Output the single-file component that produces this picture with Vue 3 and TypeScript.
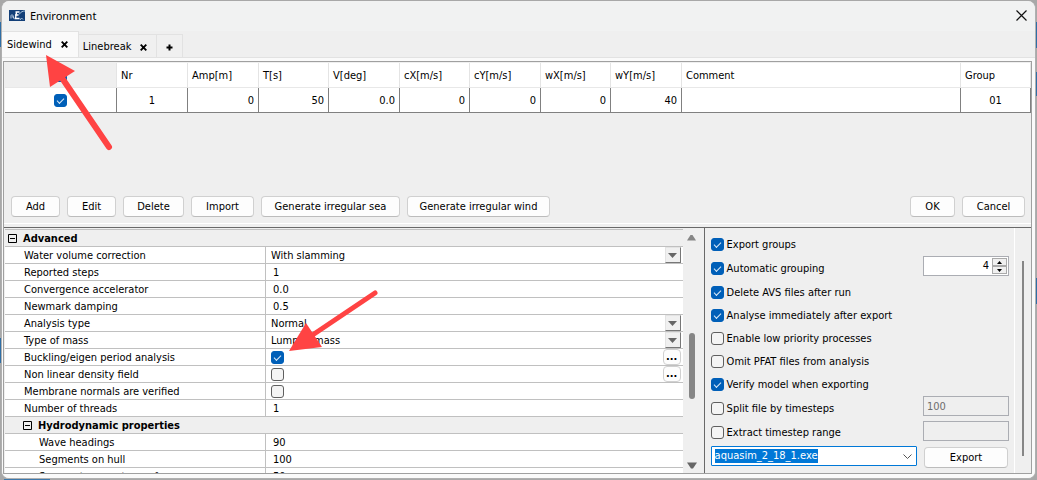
<script setup lang="ts">
import { onMounted, ref } from 'vue'

interface Column { key: string; label: string; width?: number; align: 'right' | 'center' | 'left' }
interface PropRow {
  label: string
  kind: 'group' | 'text' | 'select' | 'check'
  value?: string
  checked?: boolean
  more?: boolean
  level: number
}
interface Option { id: string; label: string; checked: boolean; size: 'mid' | 'low' | 'tall' }

const columns: Column[] = [
  { key: 'nr', label: 'Nr', width: 71, align: 'center' },
  { key: 'amp', label: 'Amp[m]', width: 71, align: 'right' },
  { key: 't', label: 'T[s]', width: 70, align: 'right' },
  { key: 'v', label: 'V[deg]', width: 71, align: 'right' },
  { key: 'cx', label: 'cX[m/s]', width: 70, align: 'right' },
  { key: 'cy', label: 'cY[m/s]', width: 71, align: 'right' },
  { key: 'wx', label: 'wX[m/s]', width: 70, align: 'right' },
  { key: 'wy', label: 'wY[m/s]', width: 71, align: 'right' },
  { key: 'comment', label: 'Comment', align: 'left' },
  { key: 'group', label: 'Group', width: 70, align: 'center' },
]

const loads = ref<Record<string, string>[]>([
  { nr: '1', amp: '0', t: '50', v: '0.0', cx: '0', cy: '0', wx: '0', wy: '40', comment: '', group: '01' },
])
const allEnabled = ref(true)
const enabled = ref([true])

const tabs = ['Sidewind', 'Linebreak']
const active = ref('Sidewind')
const actions = ['Add', 'Edit', 'Delete', 'Import', 'Generate irregular sea', 'Generate irregular wind']
const actionWidths = [49, 49, 61, 63, 139, 143]

const props = ref<PropRow[]>([
  { label: 'Advanced', kind: 'group', level: 0 },
  { label: 'Water volume correction', kind: 'select', value: 'With slamming', level: 1 },
  { label: 'Reported steps', kind: 'text', value: '1', level: 1 },
  { label: 'Convergence accelerator', kind: 'text', value: '0.0', level: 1 },
  { label: 'Newmark damping', kind: 'text', value: '0.5', level: 1 },
  { label: 'Analysis type', kind: 'select', value: 'Normal', level: 1 },
  { label: 'Type of mass', kind: 'select', value: 'Lumped mass', level: 1 },
  { label: 'Buckling/eigen period analysis', kind: 'check', checked: true, more: true, level: 1 },
  { label: 'Non linear density field', kind: 'check', checked: false, more: true, level: 1 },
  { label: 'Membrane normals are verified', kind: 'check', checked: false, level: 1 },
  { label: 'Number of threads', kind: 'text', value: '1', level: 1 },
  { label: 'Hydrodynamic properties', kind: 'group', level: 1 },
  { label: 'Wave headings', kind: 'text', value: '90', level: 2 },
  { label: 'Segments on hull', kind: 'text', value: '100', level: 2 },
  { label: 'Segments on water surface', kind: 'text', value: '50', level: 2 },
])

const options = ref<Option[]>([
  { id: 'groups', label: 'Export groups', checked: true, size: 'mid' },
  { id: 'auto', label: 'Automatic grouping', checked: true, size: 'mid' },
  { id: 'avs', label: 'Delete AVS files after run', checked: true, size: 'mid' },
  { id: 'analyse', label: 'Analyse immediately after export', checked: true, size: 'low' },
  { id: 'priority', label: 'Enable low priority processes', checked: false, size: 'low' },
  { id: 'pfat', label: 'Omit PFAT files from analysis', checked: false, size: 'low' },
  { id: 'verify', label: 'Verify model when exporting', checked: true, size: 'low' },
  { id: 'split', label: 'Split file by timesteps', checked: false, size: 'mid' },
  { id: 'range', label: 'Extract timestep range', checked: false, size: 'tall' },
])

const grouping = ref(4)
const splitSteps = ref('100')
const stepRange = ref('')
const program = ref('aquasim_2_18_1.exe')
const programBox = ref<HTMLInputElement | null>(null)

onMounted(() => {
  programBox.value?.focus()
  programBox.value?.select()
})
</script>

<template>
  <div class="desktop">
    <div class="window" role="dialog" aria-label="Environment">
      <header class="titlebar">
        <svg class="logo" width="16" height="11" viewBox="0 0 16 11" aria-hidden="true">
          <rect width="16" height="11" fill="#123f78" />
          <path d="M1.500 6.500c0-2 3-2 3 0v2M2 8.500c-1-1.500 1-2 2.500-1.500" stroke="#b9cce0" stroke-width="1" fill="none" />
          <path d="M6.500 2h4M6 5h3.500M5.500 8.500h5M7.500 2L6.500 8.500" stroke="#fff" stroke-width="1.400" fill="none" />
          <path d="M10 4.500c2-3 4-3.500 6-3.500M11 10l1.500-2 1.500 1.500" stroke="#a9c4de" stroke-width="1" fill="none" />
        </svg>
        <h1>Environment</h1>
        <button class="close" type="button" aria-label="Close">
          <svg width="11" height="11" viewBox="0 0 11 11"><path d="M.5.5l10 10M10.500.5l-10 10" stroke="#111" stroke-width="1.200" /></svg>
        </button>
      </header>

      <nav class="tabs">
        <div v-for="tab in tabs" :key="tab" class="tab" :class="{ active: tab === active }">
          <button type="button" @click="active = tab">{{ tab }}</button>
          <button type="button" class="tab-icon" :aria-label="'Close ' + tab">
            <svg width="7" height="7" viewBox="0 0 7 7"><path d="M.7.7l5.600 5.600M6.300.7L.7 6.300" stroke="#000" stroke-width="1.900" /></svg>
          </button>
        </div>
        <div class="tab add">
          <button type="button" class="tab-icon" aria-label="Add tab">
            <svg width="7" height="7" viewBox="0 0 7 7"><path d="M3.500.5v6M.5 3.500h6" stroke="#000" stroke-width="2" /></svg>
          </button>
        </div>
      </nav>

      <main class="page">
        <div class="frame">
          <section class="upper">
            <table class="loads">
              <colgroup>
                <col class="c-check" />
                <col v-for="c in columns" :key="c.key" :style="c.width ? { width: c.width + 'px' } : {}" />
              </colgroup>
              <thead>
                <tr>
                  <th class="center corner"><input v-model="allEnabled" type="checkbox" aria-label="Enable all" /></th>
                  <th v-for="c in columns" :key="c.key" scope="col">{{ c.label }}</th>
                </tr>
              </thead>
              <tbody>
                <tr v-for="(row, i) in loads" :key="i">
                  <td class="center"><input v-model="enabled[i]" type="checkbox" aria-label="Enable load" /></td>
                  <td v-for="c in columns" :key="c.key" :class="c.align">{{ row[c.key] }}</td>
                </tr>
              </tbody>
            </table>
            <div class="actions">
              <button v-for="(a, i) in actions" :key="a" type="button" class="btn" :style="{ width: actionWidths[i] + 'px' }">{{ a }}</button>
              <span class="spacer"></span>
              <button type="button" class="btn ok">OK</button>
              <button type="button" class="btn cancel">Cancel</button>
            </div>
          </section>

          <section class="lower">
            <div class="grid-pane">
              <table class="props">
                <colgroup><col class="c-name" /><col /></colgroup>
                <tbody>
                  <tr v-for="row in props" :key="row.label" :class="row.kind">
                    <th v-if="row.kind === 'group'" colspan="2" scope="colgroup" :class="'g' + row.level">
                      <button type="button" class="fold">
                        <svg width="9" height="9" viewBox="0 0 9 9" aria-hidden="true"><path d="M.5.5h8v8h-8zM2 4.500h5" fill="none" stroke="#000" /></svg>
                        {{ row.label }}
                      </button>
                    </th>
                    <template v-else>
                      <th scope="row" :class="'l' + row.level">{{ row.label }}</th>
                      <td>
                        <div class="cell">
                          <template v-if="row.kind === 'select'">
                            <select v-model="row.value" :aria-label="row.label"><option>{{ row.value }}</option></select>
                            <span class="drop"><svg width="9" height="5" viewBox="0 0 9 5"><path d="M0 0h9L4.500 5z" fill="#666" /></svg></span>
                          </template>
                          <input v-else-if="row.kind === 'check'" v-model="row.checked" type="checkbox" :aria-label="row.label" />
                          <input v-else v-model="row.value" class="plain" type="text" :aria-label="row.label" />
                          <button v-if="row.more" type="button" class="more" :aria-label="row.label + ' settings'">...</button>
                        </div>
                      </td>
                    </template>
                  </tr>
                </tbody>
              </table>
              <div class="scroll">
                <svg width="9" height="7" viewBox="0 0 9 7"><path d="M0 6.500L3.500 1h2L9 6.500z" fill="#868686" /></svg>
                <div class="track"><div class="thumb"></div></div>
                <svg width="10" height="7" viewBox="0 0 10 7"><path d="M0 .5h10L6 6.500H4z" fill="#666" /></svg>
              </div>
            </div>

            <div class="export-pane">
              <form class="export" @submit.prevent>
                <div v-for="o in options" :key="o.id" class="opt" :class="o.size">
                  <label><input v-model="o.checked" type="checkbox" /><span>{{ o.label }}</span></label>
                  <div v-if="o.id === 'auto'" class="spin field">
                    <input v-model="grouping" type="text" aria-label="Group count" />
                    <div class="steps">
                      <button type="button" aria-label="Increase" @click="grouping++"><svg width="5" height="3" viewBox="0 0 5 3"><path d="M0 3L2.500 0 5 3z" /></svg></button>
                      <button type="button" aria-label="Decrease" @click="grouping--"><svg width="5" height="3" viewBox="0 0 5 3"><path d="M0 0h5L2.500 3z" /></svg></button>
                    </div>
                  </div>
                  <input v-if="o.id === 'split'" v-model="splitSteps" class="field" type="text" disabled aria-label="Timesteps per file" />
                  <input v-if="o.id === 'range'" v-model="stepRange" class="field" type="text" disabled aria-label="Timestep range" />
                </div>
                <div class="run">
                  <div class="combo">
                    <input ref="programBox" v-model="program" type="text" aria-label="Program" />
                    <svg width="9" height="5" viewBox="0 0 9 5"><path d="M.5.5l4 4 4-4" fill="none" stroke="#555" /></svg>
                  </div>
                  <button type="submit" class="btn">Export</button>
                </div>
              </form>
              <div class="scroll-slim"><div class="slim-thumb"></div></div>
            </div>
          </section>
        </div>
      </main>
    </div>

    <svg class="arrows" width="400" height="370" viewBox="0 0 400 370" aria-hidden="true">
      <g fill="#ff4343" stroke="#ff4343">
        <path d="M62 78L109 147" stroke-width="6" stroke-linecap="round" />
        <path d="M46 55L75 71L50 87z" stroke="none" />
        <path d="M314 334L375 293" stroke-width="5" stroke-linecap="round" />
        <path d="M289 351L306 323L322 347z" stroke="none" />
      </g>
    </svg>
  </div>
</template>

<style>
body { margin: 0; }
</style>

<style scoped>
* { box-sizing: border-box; }
.desktop {
  height: 100vh;
  min-height: 440px;
  padding: 1px;
  position: relative;
  overflow: hidden;
  font: 11px/14px "DejaVu Sans Condensed", "DejaVu Sans", sans-serif;
  color: #000;
  background:
    linear-gradient(#2f6ea5, #2f6ea5) 0 22px / 2px 25px no-repeat,
    linear-gradient(#2f6ea5, #2f6ea5) 0 338px / 2px 25px no-repeat,
    linear-gradient(#2f6ea5, #2f6ea5) 100% 22px / 1px 26px no-repeat,
    linear-gradient(#2f6ea5, #2f6ea5) 100% 72px / 1px 24px no-repeat,
    linear-gradient(#2f6ea5, #2f6ea5) 100% 278px / 1px 26px no-repeat,
    linear-gradient(#3d78ab, #3d78ab) 4px 100% / 46px 1px no-repeat,
    #a8a8a8;
}
button, input, select { font: inherit; color: inherit; margin: 0; padding: 0; }
button { border: 0; background: none; }
svg { display: block; flex: none; }
.window {
  height: 100%;
  display: flex;
  flex-direction: column;
  background: #efefef;
  border: 1px solid #b0b0b0;
  border-top: 0;
  border-radius: 8px;
  overflow: hidden;
}
.titlebar {
  flex: none;
  height: 30px;
  display: flex;
  align-items: center;
  padding: 0 8px 2px 7px;
  background: #f1f2f2;
}
.titlebar h1 {
  flex: 1;
  margin: 1px 0 0 5px;
  font: 11px/16px "Noto Sans", "Open Sans", sans-serif;
}
.tabs { flex: none; display: flex; align-items: flex-end; height: 26px; }
.tab {
  display: flex;
  align-items: center;
  gap: 9px;
  height: 23px;
  padding: 2px 9px 0 4px;
  border: 1px solid #e2e2e2;
  border-width: 1px 1px 0 0;
  background: #f0f0f0;
}
.tab.active { height: 26px; padding: 0 10px 0 5px; background: #fafafa; }
.tab.add { padding: 2px 9px 0; }
.page {
  flex: 1;
  min-height: 0;
  display: flex;
  padding: 3px 3px 4px 1px;
  background: #fafafa;
  border-top: 1px solid #e2e2e2;
}
.frame {
  flex: 1;
  min-width: 0;
  display: flex;
  flex-direction: column;
  border: 1px solid #a0a0a0;
  background: #efefef;
}
.upper {
  flex: none;
  height: 162px;
  display: flex;
  flex-direction: column;
  justify-content: space-between;
  padding: 1px 0 6px 1px;
  border-bottom: 1px solid #fff;
}
table { width: 100%; table-layout: fixed; border-collapse: separate; border-spacing: 0; }
th { font-weight: normal; text-align: left; }
th, td { padding: 0; white-space: nowrap; }
.c-check { width: 112px; }
.loads th {
  height: 25px;
  padding: 2px 0 0 4px;
  background: #fff;
  border-right: 1px solid #e4e4e4;
  border-bottom: 1px solid #e8e8e8;
}
.loads th.corner { background: #efefef; padding: 0; }
.loads td {
  height: 25px;
  padding-top: 1px;
  background: #fff;
  border-right: 1px solid #808080;
  border-bottom: 1px solid #808080;
}
.loads .right { text-align: right; padding-right: 4px; }
.loads .center { text-align: center; }
input[type="checkbox"] {
  appearance: none;
  flex: none;
  display: block;
  width: 13px;
  height: 13px;
  border: 1px solid #5f5f5f;
  border-radius: 3px;
  background: #f4f4f4;
}
.center input[type="checkbox"] { margin: 0 auto; }
input[type="checkbox"]:checked { background: #005fb8; border-color: #005fb8; }
input[type="checkbox"]:checked::after {
  content: "";
  display: block;
  width: 6px;
  height: 3px;
  margin: 3px 0 0 2px;
  border: solid #dcebf8;
  border-width: 0 0 1px 1px;
  transform: rotate(-45deg);
}
.actions { display: flex; gap: 7px; padding: 0 6px; }
.spacer { flex: 1; }
.btn {
  height: 21px;
  background: #fdfdfd;
  border: 1px solid #d0d0d0;
  border-bottom-color: #bcbcbc;
  border-radius: 4px;
  white-space: nowrap;
}
.btn.ok { width: 45px; }
.btn.cancel { width: 63px; }
.lower {
  flex: 1;
  min-height: 0;
  display: flex;
  margin-top: 3px;
  border-top: 1px solid #696969;
}
.grid-pane { flex: 698 1 0; min-width: 0; display: flex; overflow: hidden; padding: 1px 4px 0 1px; }
.props { flex: 1; min-width: 0; align-self: flex-start; border-top: 1px solid #c0c0c0; }
.c-name { width: 261px; }
.props th, .props td {
  height: 17px;
  line-height: 15px;
  background: #fff;
  border-bottom: 1px solid #c0c0c0;
}
.props th { padding-top: 1px; border-right: 1px solid #c0c0c0; }
.props .group th { padding-top: 0; background: #efefef; border-right: 0; font-weight: bold; }
.props .g0 { padding-left: 3px; }
.props .g1 { padding-left: 18px; }
.props .l1 { padding-left: 19px; }
.props .l2 { padding-left: 34px; }
.fold { display: flex; align-items: center; gap: 6px; height: 16px; font-weight: bold; }
.cell { display: flex; align-items: center; justify-content: space-between; height: 16px; padding: 0 2px 0 5px; }
.cell select {
  appearance: none;
  flex: 1;
  min-width: 0;
  height: 16px;
  padding-top: 1px;
  border: 0;
  background: transparent;
}
.plain { width: 100%; height: 16px; border: 0; padding: 1px 0 0 2px; background: transparent; }
.drop {
  flex: none;
  width: 16px;
  height: 16px;
  display: flex;
  align-items: center;
  justify-content: center;
  background: #f0f0f0;
  border: 1px solid #e3e3e3;
  border-right-color: #777;
  border-bottom-color: #777;
}
.more {
  width: 18px;
  height: 16px;
  font-weight: bold;
  line-height: 12px;
  background: #fdfdfd;
  border: 1px solid #d0d0d0;
  border-radius: 4px;
}
.scroll {
  flex: none;
  width: 16px;
  margin-left: 1px;
  display: flex;
  flex-direction: column;
  align-items: center;
  padding: 5px 0 4px;
  background: #efefef;
}
.track { flex: 1; width: 6px; display: flex; flex-direction: column; padding-top: 92px; }
.thumb { height: 66px; border-radius: 3px; background: #868686; }
.export-pane { flex: 328 1 0; min-width: 0; display: flex; overflow: hidden; border-left: 1px solid #696969; }
.export { flex: 1; min-width: 0; padding: 4px 5px 0 6px; }
.opt { display: flex; align-items: center; justify-content: space-between; height: 24px; }
.opt.low { height: 23px; }
.opt.tall { height: 25px; }
.opt label { display: flex; align-items: center; gap: 3px; white-space: nowrap; }
.opt label span { line-height: 15px; }
.field { flex: none; width: 86px; height: 20px; border: 1px solid #abadb3; background: #fff; margin-bottom: 4px; }
input.field { padding-left: 3px; background: #efefef; color: #6d6d6d; }
.spin { display: flex; padding: 1px; }
.spin input { flex: 1; min-width: 0; border: 0; padding-right: 3px; text-align: right; background: transparent; }
.steps { width: 15px; display: flex; flex-direction: column; }
.steps button {
  flex: 1;
  display: flex;
  align-items: center;
  justify-content: center;
  background: #f0f0f0;
  border: 1px solid #aaa;
}
.run { display: flex; gap: 7px; padding-top: 1px; }
.combo {
  flex: 1;
  min-width: 0;
  height: 20px;
  display: flex;
  align-items: center;
  padding: 0 4px 0 3px;
  border: 1px solid #0078d7;
  border-radius: 1px;
  background: #fff;
}
.combo input { flex: 1; min-width: 0; height: 14px; border: 0; outline: 0; background: transparent; caret-color: transparent; }
.combo input::selection { background: #0078d7; color: #fff; }
.run .btn { width: 84px; margin: 1px 1px 0 0; }
.scroll-slim { flex: none; width: 17px; border-left: 1px solid #fff; padding: 33px 0 17px 7px; }
.slim-thumb { width: 2px; height: 100%; background: #868686; }
.arrows { position: absolute; left: 0; top: 0; pointer-events: none; }
</style>
